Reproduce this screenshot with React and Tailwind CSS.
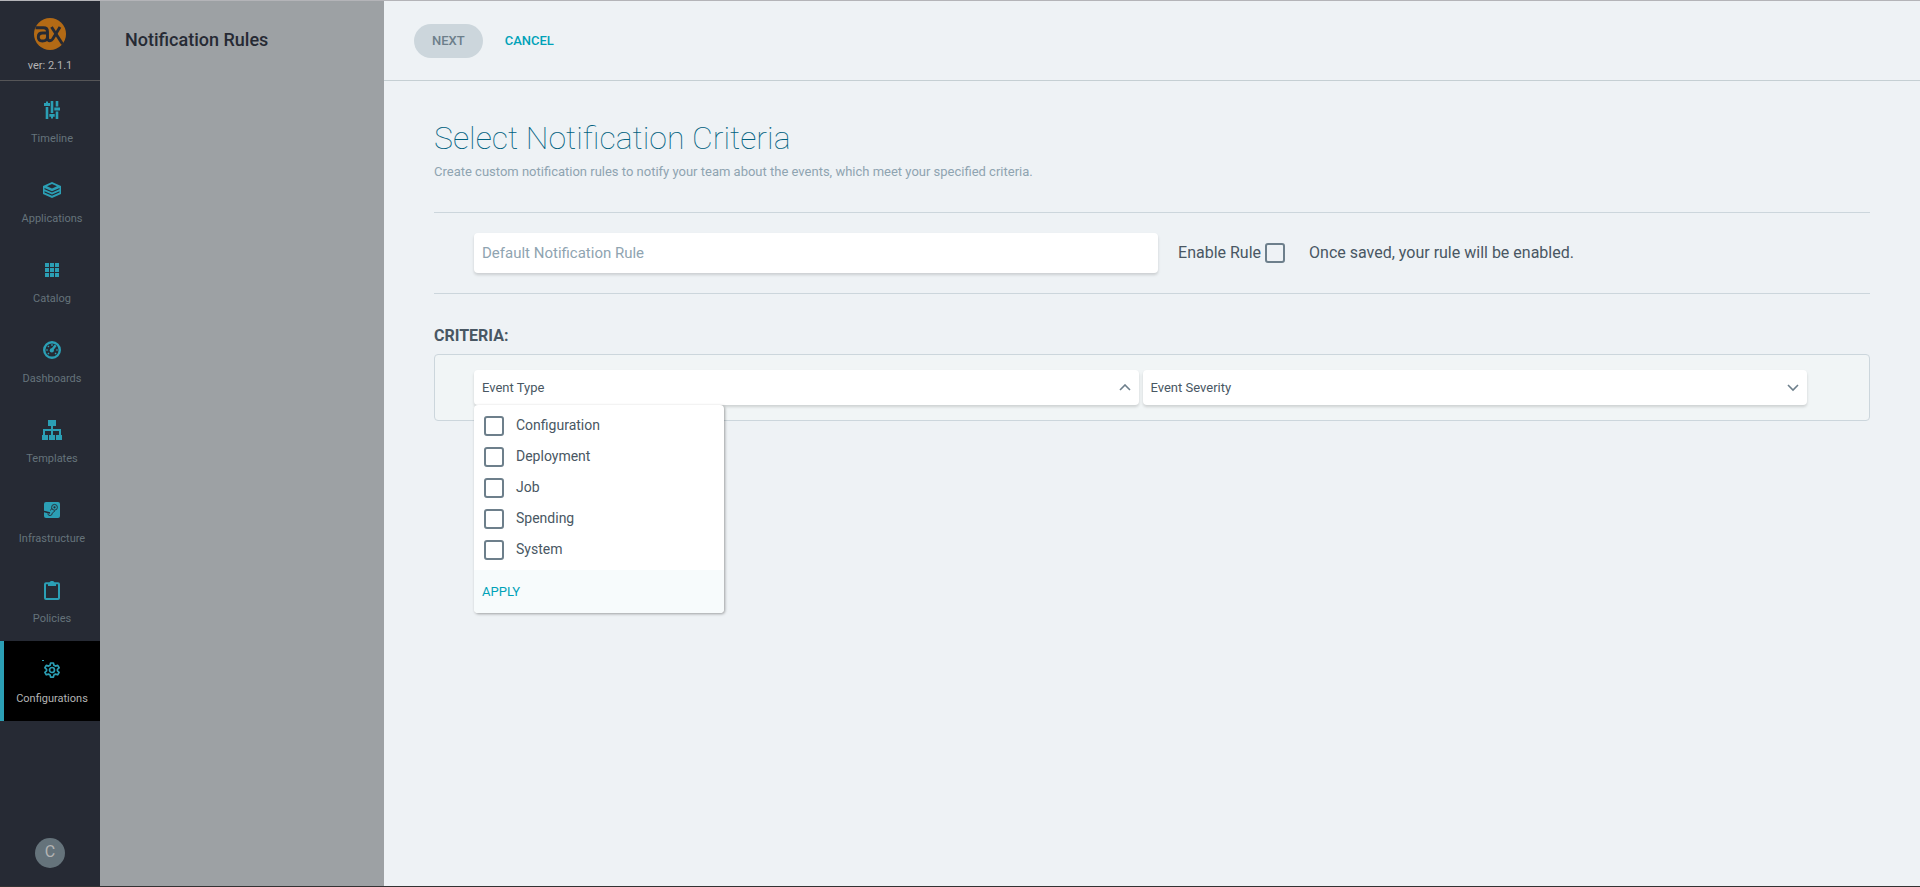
import { useState } from "react";

const MENU = ["Configuration", "Deployment", "Job", "Spending", "System"];

function IconTimeline() {
  return (
    <svg width="16" height="18" viewBox="0 0 16 18" fill="currentColor" aria-hidden="true">
      <path d="M2 1l1-1 1 1v1h2v3H0V2h2zM1.700 6h2.600v12H1.700zM6.700 0h2.600v12H6.700zM5.300 13h5.400v2.800H9V17l-1 1-1-1v-1.200H5.300zM11.700 0h2.600v5.500h-2.600zM10.300 6.500H16v3h-5.700zM11.700 10.500h2.600V18h-2.600z" />
    </svg>
  );
}

function IconLayers() {
  return (
    <svg width="18" height="16" viewBox="0 0 18 16" fill="currentColor" aria-hidden="true">
      <path
        fillRule="evenodd"
        d="M9 0l9 4v8l-9 4-9-4V4zM9 2L4 4.300l5 2.200 5-2.200zM1.500 6v1.200L9 10.500l7.500-3.300V6L9 9.300zM1.500 9.200v1.200L9 13.700l7.500-3.300V9.200L9 12.500z"
      />
    </svg>
  );
}

function IconGrid() {
  return (
    <svg width="14" height="14" viewBox="0 0 14 14" fill="currentColor" aria-hidden="true">
      <path d="M0 0h4v4H0zM5 0h4v4H5zM10 0h4v4h-4zM0 5h4v4H0zM5 5h4v4H5zM10 5h4v4h-4zM0 10h4v4H0zM5 10h4v4H5zM10 10h4v4h-4z" />
    </svg>
  );
}

function IconGauge() {
  return (
    <svg width="18" height="18" viewBox="0 0 18 18" fill="none" stroke="currentColor" aria-hidden="true">
      <circle cx="9" cy="9" r="7.800" strokeWidth="2.400" />
      <path d="M3 9h2M13 9h2M4.800 4.800l1.200 1.200M9 3v2M4.800 13.200l1.200-1.200M13.200 13.200L12 12" strokeWidth="1.200" />
      <path d="M8.500 9.500l4.200-5.200" strokeWidth="2.400" />
      <circle cx="8.800" cy="9.400" r="2.100" fill="currentColor" stroke="none" />
    </svg>
  );
}

function IconSitemap() {
  return (
    <svg width="20" height="20" viewBox="0 0 20 20" fill="currentColor" aria-hidden="true">
      <path d="M6 0h8v6h-3v3h8v6h1v5h-6v-5h3v-4h-6v4h2v5H7v-5h2v-4H3v4h3v5H0v-5h1V9h8V6H6z" />
    </svg>
  );
}

function IconInfra() {
  return (
    <svg width="16" height="16" viewBox="0 0 16 16" aria-hidden="true">
      <rect width="16" height="16" rx="2" fill="#2b9fb5" />
      <g fill="none" stroke="#262a34">
        <circle cx="10.500" cy="5.300" r="2.900" strokeWidth="0.900" />
        <path d="M3.800 11.500a2.200 2.200 0 0 0 4.400-.3l2.800-2.400M6.500 8.500l1.200-2.200" strokeWidth="0.900" />
        <path d="M0 9.500l6 1.500" strokeWidth="1.500" />
      </g>
      <circle cx="10.500" cy="5.300" r="1.100" fill="#262a34" />
    </svg>
  );
}

function IconClipboard() {
  return (
    <svg width="16" height="19" viewBox="0 0 16 19" fill="currentColor" aria-hidden="true">
      <path
        fillRule="evenodd"
        d="M5.500 1.200C6 .4 7 0 8 0s2 .4 2.500 1.200H14a2 2 0 0 1 2 2V17a2 2 0 0 1-2 2H2a2 2 0 0 1-2-2V3.200a2 2 0 0 1 2-2zM2 3.200V17h12V3.200h-2V5H4V3.200z"
      />
    </svg>
  );
}

function IconGear() {
  return (
    <svg width="20" height="20" viewBox="0 0 20 20" fill="none" stroke="currentColor" aria-hidden="true">
      <path
        d="M8.600 3h2.800l.5 2.200 1.600.9 2.200-.7 1.400 2.400-1.700 1.500v1.500l1.700 1.500-1.400 2.500-2.200-.7-1.600.9-.5 2.100H8.600L8.100 15l-1.600-.9-2.200.7-1.400-2.500 1.700-1.500V9.300L2.900 7.800l1.400-2.400 2.200.7 1.600-.9z"
        strokeWidth="1.700"
        strokeLinejoin="round"
      />
      <circle cx="10" cy="10" r="2.500" strokeWidth="1.700" />
      <path d="M0 .5h2" strokeWidth="1" />
    </svg>
  );
}

const NAV = [
  { label: "Timeline", Icon: IconTimeline },
  { label: "Applications", Icon: IconLayers },
  { label: "Catalog", Icon: IconGrid },
  { label: "Dashboards", Icon: IconGauge },
  { label: "Templates", Icon: IconSitemap },
  { label: "Infrastructure", Icon: IconInfra },
  { label: "Policies", Icon: IconClipboard },
  { label: "Configurations", Icon: IconGear, active: true },
];

function Logo() {
  return (
    <svg width="32" height="32" viewBox="0 0 32 32" aria-hidden="true">
      <circle cx="16" cy="16" r="16" fill="#b36a15" />
      <g fill="none" stroke="#262a34" strokeWidth="2.900" strokeLinecap="butt">
        <path d="M1.500 9.800H9.500q4 0 4 4V19.500q0 3.300 2.500 3.300 1.500 0 2.700-1.800L26 9" />
        <path d="M13.500 15H8.500q-4.200 0-4.200 4t4 4q5.200 0 5.200-4" />
        <path d="M17.500 9L28.500 26" />
      </g>
    </svg>
  );
}

function Sidebar() {
  return (
    <aside className="flex w-[100px] shrink-0 flex-col bg-[#262a34]">
      <div className="flex h-20 flex-col items-center border-b border-[#555557] pt-[17px]">
        <Logo />
        <span className="mt-2 text-[11px] leading-4 text-[#b4b4b4]">ver: 2.1.1</span>
      </div>
      <nav className="flex flex-col">
        {NAV.map(({ label, Icon, active }) => (
          <a
            key={label}
            href="#"
            className={
              "flex h-20 flex-col items-center border-l-4 pt-[15px] " +
              (active ? "border-[#2b9fb5] bg-black text-[#b4b4b4]" : "border-transparent text-[#65737b]")
            }
          >
            <span className="flex h-7 items-center text-[#2b9fb5]">
              <Icon />
            </span>
            <span className="mt-[7px] text-[11px] leading-4">{label}</span>
          </a>
        ))}
      </nav>
      <button
        type="button"
        className="mx-auto mt-auto mb-[18px] h-[30px] w-[30px] rounded-full bg-[#65737b] pb-[2px] text-base leading-7 text-[#b4b4b4]"
      >
        C
      </button>
    </aside>
  );
}

const BOX =
  "h-5 w-5 shrink-0 appearance-none rounded-[3px] border-2 border-[#6d7f8b] bg-transparent checked:bg-[#00a2b8]";

function Chevron({ up }) {
  return (
    <svg width="12" height="8" viewBox="0 0 12 8" fill="none" stroke="#6d7f8b" strokeWidth="1.600" aria-hidden="true">
      <path d={up ? "M1 6l5-5 5 5" : "M1 1l5 5 5-5"} />
    </svg>
  );
}

function FilterButton({ label, open, onClick }) {
  return (
    <button
      type="button"
      aria-expanded={open}
      onClick={onClick}
      className="flex h-[35px] w-full items-center justify-between rounded bg-white px-2 text-[13px] text-[#495763] shadow-[0_2px_3px_rgba(0,0,0,0.15)]"
    >
      {label}
      <Chevron up={open} />
    </button>
  );
}

export default function App() {
  const [open, setOpen] = useState(true);
  const [severityOpen, setSeverityOpen] = useState(false);
  return (
    <div className="flex min-h-screen border-t border-b border-t-[#b4b4b8] border-b-[#333333] bg-[#eef2f5] font-[Roboto,sans-serif] text-[#495763]">
      <Sidebar />
      <section className="w-[284px] shrink-0 bg-[#9da1a4] px-[25px] pt-[25px]">
        <h2 className="text-lg leading-7 font-medium text-[#262a34]">Notification Rules</h2>
      </section>
      <main className="min-w-0 flex-1">
        <header className="flex h-20 items-center border-b border-[#c5cfd3] px-[30px] text-[13px] font-medium">
          <button type="button" className="h-[34px] rounded-full bg-[#ccd6dc] px-[18px] text-[#6d7f8b]">
            NEXT
          </button>
          <button type="button" className="ml-[22px] h-[34px] text-[#00a2b8]">
            CANCEL
          </button>
        </header>
        <div className="px-[50px] pt-[37px]">
          <h1 className="text-[32px] leading-10 font-thin text-[#00617f]">Select Notification Criteria</h1>
          <p className="mt-1 text-[13px] leading-5 text-[#8fa4b1]">
            Create custom notification rules to notify your team about the events, which meet your specified criteria.
          </p>
          <div className="mt-[30px] flex h-[82px] items-center border-y border-[#ccd6dc] pl-10">
            <input
              type="text"
              aria-label="Rule name"
              placeholder="Default Notification Rule"
              className="h-10 w-[49%] rounded bg-white px-2 text-[15px] shadow-[0_2px_3px_rgba(0,0,0,0.15)] outline-none placeholder:text-[#8fa4b1]"
            />
            <label htmlFor="enable" className="ml-5 text-base">
              Enable Rule
            </label>
            <input id="enable" type="checkbox" className={BOX + " ml-1"} />
            <span className="ml-6 text-base">Once saved, your rule will be enabled.</span>
          </div>
          <h3 className="mt-[30px] text-base leading-6 font-bold">CRITERIA:</h3>
          <div className="mt-[6px] grid grid-cols-2 gap-1 rounded border border-[#ccd6dc] bg-[#f1f5f6] py-[15px] pr-[62px] pl-[39px]">
            <div className="relative">
              <FilterButton label="Event Type" open={open} onClick={() => setOpen(!open)} />
              {open && (
                <div className="absolute top-full left-0 w-[250px] overflow-hidden rounded bg-white shadow-[1px_1px_3px_rgba(0,0,0,0.35)]">
                  <ul className="flex flex-col gap-[11px] px-[10px] pt-[11px] pb-[10px]">
                    {MENU.map((name) => (
                      <li key={name} className="flex h-5 items-start">
                        <input id={name} type="checkbox" className={BOX} />
                        <label htmlFor={name} className="pl-3 text-sm leading-[18px]">
                          {name}
                        </label>
                      </li>
                    ))}
                  </ul>
                  <div className="flex h-[43px] items-center bg-[#f7fbfc] px-2">
                    <button type="button" className="text-[13px] text-[#00a2b8]">
                      APPLY
                    </button>
                  </div>
                </div>
              )}
            </div>
            <FilterButton label="Event Severity" open={severityOpen} onClick={() => setSeverityOpen(!severityOpen)} />
          </div>
        </div>
      </main>
    </div>
  );
}
